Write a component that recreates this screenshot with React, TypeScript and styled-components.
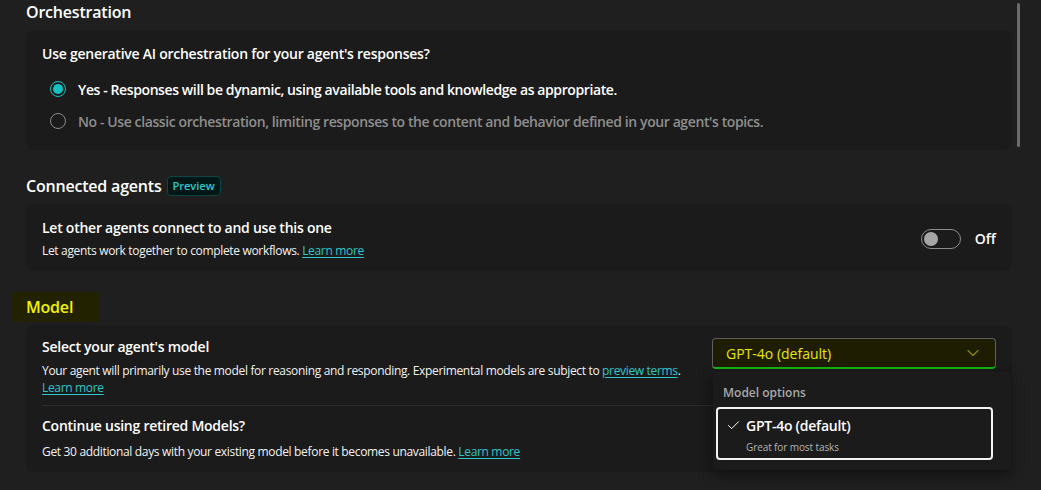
import React from 'react';
import styled, { createGlobalStyle } from 'styled-components';
import { Check, ChevronDown } from 'lucide-react';

const GlobalStyle = createGlobalStyle`
  html, body {
    margin: 0;
    padding: 0;
    background: #1f1f1f;
  }
  body {
    font-family: "Open Sans", "Noto Sans", sans-serif;
    color: #ffffff;
    -webkit-font-smoothing: antialiased;
  }
`;

const Page = styled.div`
  display: flex;
  width: 1041px;
  height: 490px;
  overflow: hidden;
  background: #1f1f1f;
`;

const Main = styled.div`
  width: 986px;
  padding-left: 26px;
  display: flex;
  flex-direction: column;
`;

const ScrollTrack = styled.div`
  padding: 3px 0 0 5px;
`;

const ScrollThumb = styled.div`
  width: 3px;
  height: 144px;
  background: #6b6b6b;
  border-radius: 2px;
`;

const Section = styled.section`
  display: flex;
  flex-direction: column;
  & + & {
    margin-top: 24px;
  }
`;

const Heading = styled.h2<{ $marked?: boolean }>`
  margin: 2px 0 8px;
  height: 20px;
  display: flex;
  align-items: center;
  gap: 5px;
  font-size: 16px;
  font-weight: 600;
  letter-spacing: -0.2px;
  color: ${(p) => (p.$marked ? '#f2f200' : '#ffffff')};
`;

const Marker = styled.span`
  background: #222200;
  margin-left: -14px;
  padding: 4px 26px 4px 14px;
  border-radius: 3px;
`;

const Badge = styled.span`
  font-size: 11px;
  font-weight: 600;
  color: #2fc8c8;
  background: #041717;
  border: 1px solid #0d4545;
  border-radius: 4px;
  padding: 1px 5px 2px;
  letter-spacing: 0;
`;

const Card = styled.div`
  background: #1b1b1b;
  border-radius: 8px;
  padding: 0 16px;
  position: relative;
`;

const Row = styled.div<{ $pt: number; $pb: number; $divider?: boolean; $stack?: boolean }>`
  display: flex;
  flex-direction: ${(p) => (p.$stack ? 'column' : 'row')};
  align-items: ${(p) => (p.$stack ? 'stretch' : 'center')};
  gap: ${(p) => (p.$stack ? 0 : 20)}px;
  padding: ${(p) => p.$pt}px 0 ${(p) => p.$pb}px;
  border-top: ${(p) => (p.$divider ? '1px solid #2c2c2c' : 'none')};
`;

const TextCol = styled.div`
  flex: 1;
  display: flex;
  flex-direction: column;
  align-self: flex-start;
`;

const Title = styled.div`
  font-size: 14px;
  font-weight: 600;
  line-height: 20px;
  letter-spacing: -0.25px;
`;

const Desc = styled.div<{ $gap?: number }>`
  margin-top: ${(p) => p.$gap ?? 5}px;
  font-size: 12px;
  line-height: 17px;
  color: #f2f2f2;
  letter-spacing: -0.33px;
`;

const Link = styled.a`
  color: #2ec6cb;
  text-decoration: underline;
  text-underline-offset: 2px;
`;

const RadioGroup = styled.div`
  margin-top: 9px;
  display: flex;
  flex-direction: column;
  padding-left: 8px;
`;

const RadioRow = styled.label<{ $checked?: boolean }>`
  height: 32px;
  display: flex;
  align-items: center;
  gap: 12px;
  font-size: 14px;
  font-weight: 600;
  letter-spacing: -0.4px;
  color: ${(p) => (p.$checked ? '#ffffff' : '#8e8e8e')};
`;

const RadioCircle = styled.span<{ $checked?: boolean }>`
  width: 16px;
  height: 16px;
  box-sizing: border-box;
  border-radius: 50%;
  border: 1px solid ${(p) => (p.$checked ? '#14c2c2' : '#8a8a8a')};
  display: flex;
  align-items: center;
  justify-content: center;
  &::after {
    content: '';
    display: ${(p) => (p.$checked ? 'block' : 'none')};
    width: 10px;
    height: 10px;
    border-radius: 50%;
    background: #14c2c2;
  }
`;

const ToggleWrap = styled.div`
  display: flex;
  align-items: center;
  gap: 14px;
  font-size: 14px;
  font-weight: 600;
`;

const Toggle = styled.span`
  width: 40px;
  height: 20px;
  box-sizing: border-box;
  border: 1px solid #8c8c8c;
  border-radius: 10px;
  display: flex;
  align-items: center;
  padding-left: 2px;
  &::after {
    content: '';
    width: 14px;
    height: 14px;
    border-radius: 50%;
    background: #a6a6a6;
  }
`;

const SelectBox = styled.div`
  align-self: flex-start;
  margin-top: 1px;
  width: 284px;
  height: 31px;
  box-sizing: border-box;
  border: 1px solid #5e5e5e;
  border-bottom: 2px solid #13b813;
  border-radius: 4px;
  background: #1e1d02;
  display: flex;
  align-items: center;
  justify-content: space-between;
  padding: 0 12px 0 13px;
  font-size: 14px;
  color: #e8e800;
  position: relative;
`;

const Popup = styled.div`
  position: absolute;
  top: 33px;
  left: 0;
  width: 298px;
  height: 98px;
  box-sizing: border-box;
  background: #1b1b1b;
  border-radius: 4px;
  box-shadow: 0 4px 14px rgba(0, 0, 0, 0.45);
  padding: 12px 18px 0 3px;
  z-index: 2;
`;

const GroupLabel = styled.div`
  padding-left: 7px;
  font-size: 12px;
  font-weight: 600;
  color: #a8a8a8;
  line-height: 18px;
`;

const Option = styled.div`
  margin-top: 5px;
  border: 2px solid #f2f2f2;
  border-radius: 4px;
  height: 53px;
  box-sizing: border-box;
  display: grid;
  grid-template-columns: 20px 1fr;
  padding: 7px 0 0 8px;
  color: #ffffff;
`;

const OptionTitle = styled.div`
  font-size: 14px;
  font-weight: 600;
  line-height: 20px;
  letter-spacing: -0.25px;
`;

const OptionSub = styled.div`
  font-size: 10px;
  color: #b4b4b4;
  margin-top: 4px;
  letter-spacing: -0.1px;
`;

export default function App() {
  return (
    <>
      <GlobalStyle />
      <Page>
        <Main>
          <Section>
            <Heading>Orchestration</Heading>
            <Card>
              <Row $pt={14} $pb={13} $stack>
                <Title>Use generative AI orchestration for your agent's responses?</Title>
                <RadioGroup>
                  <RadioRow $checked>
                    <RadioCircle $checked />
                    Yes - Responses will be dynamic, using available tools and knowledge as appropriate.
                  </RadioRow>
                  <RadioRow>
                    <RadioCircle />
                    No - Use classic orchestration, limiting responses to the content and behavior defined in your agent's topics.
                  </RadioRow>
                </RadioGroup>
              </Row>
            </Card>
          </Section>

          <Section>
            <Heading>
              Connected agents <Badge>Preview</Badge>
            </Heading>
            <Card>
              <Row $pt={14} $pb={12}>
                <TextCol>
                  <Title>Let other agents connect to and use this one</Title>
                  <Desc $gap={4}>
                    Let agents work together to complete workflows. <Link>Learn more</Link>
                  </Desc>
                </TextCol>
                <ToggleWrap>
                  <Toggle />
                  Off
                </ToggleWrap>
              </Row>
            </Card>
          </Section>

          <Section>
            <Heading $marked>
              <Marker>Model</Marker>
            </Heading>
            <Card>
              <Row $pt={12} $pb={9}>
                <TextCol>
                  <Title>Select your agent's model</Title>
                  <Desc>
                    Your agent will primarily use the model for reasoning and responding. Experimental models are subject to{' '}
                    <Link>preview terms</Link>.
                    <br />
                    <Link>Learn more</Link>
                  </Desc>
                </TextCol>
                <SelectBox>
                  GPT-4o (default)
                  <ChevronDown size={20} strokeWidth={1.4} color="#8c8a00" />
                  <Popup>
                    <GroupLabel>Model options</GroupLabel>
                    <Option>
                      <Check size={15} strokeWidth={1.6} color="#ffffff" style={{ marginTop: 2 }} />
                      <div>
                        <OptionTitle>GPT-4o (default)</OptionTitle>
                        <OptionSub>Great for most tasks</OptionSub>
                      </div>
                    </Option>
                  </Popup>
                </SelectBox>
              </Row>
              <Row $pt={10} $pb={12} $divider>
                <TextCol>
                  <Title>Continue using retired Models?</Title>
                  <Desc $gap={7}>
                    Get 30 additional days with your existing model before it becomes unavailable. <Link>Learn more</Link>
                  </Desc>
                </TextCol>
              </Row>
            </Card>
          </Section>
        </Main>
        <ScrollTrack>
          <ScrollThumb />
        </ScrollTrack>
      </Page>
    </>
  );
}
